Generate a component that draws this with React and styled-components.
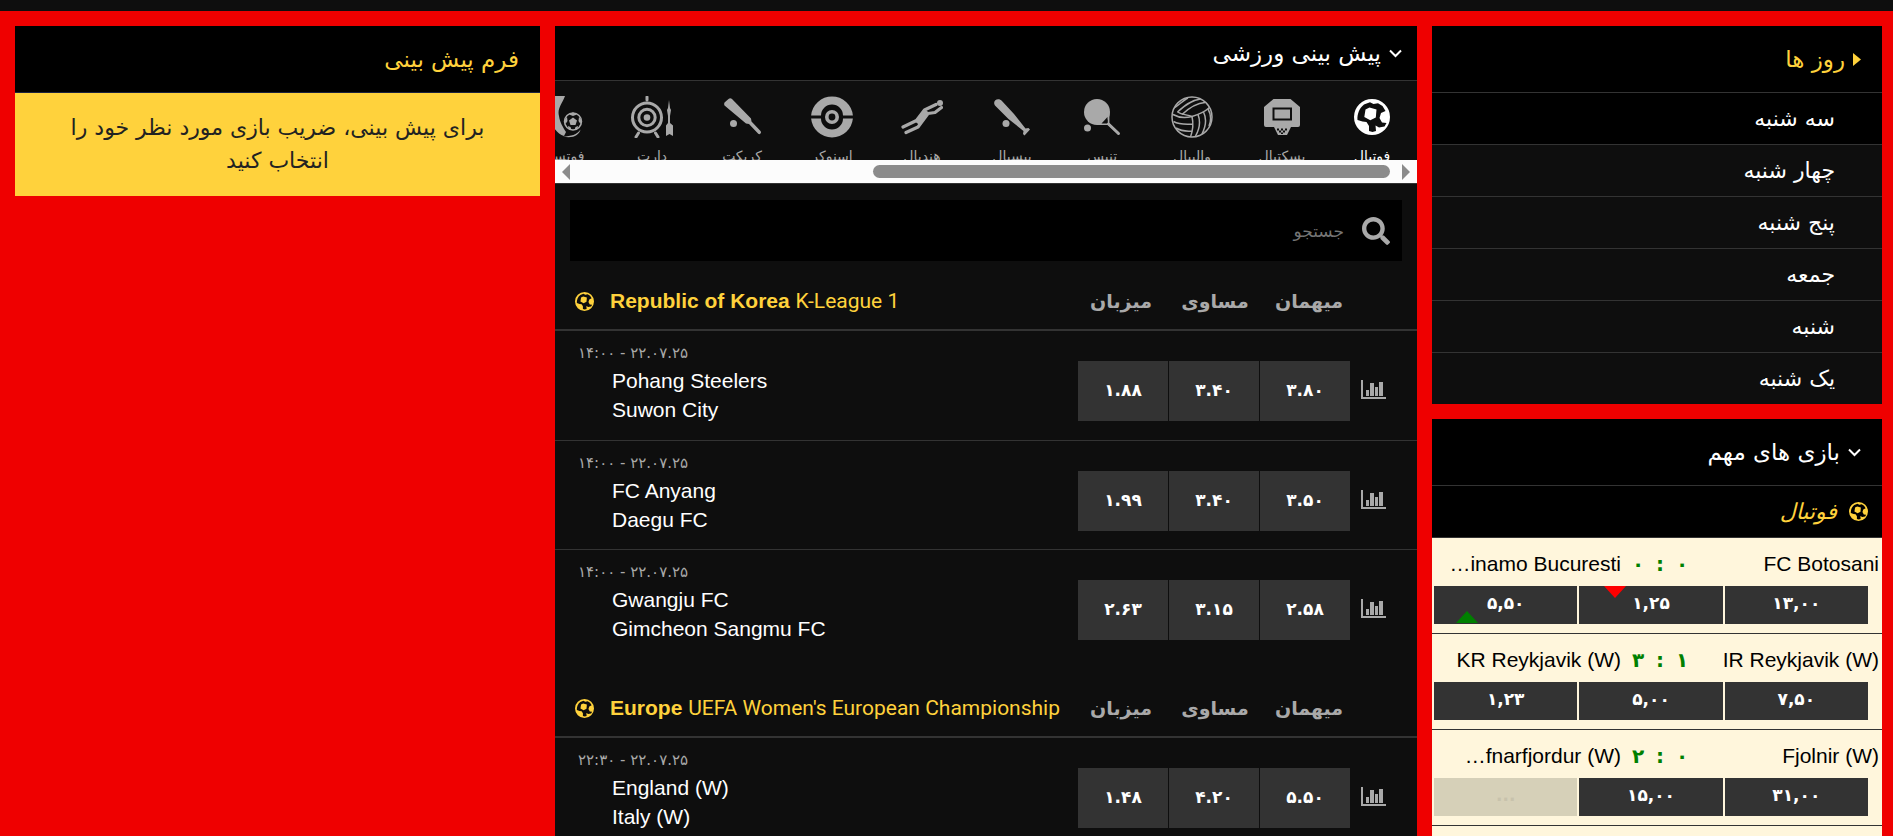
import React from "react";
import styled, { createGlobalStyle, css, ThemeProvider } from "styled-components";
import { FaSearch } from "react-icons/fa";

const theme = {
  accent: "#ffd23c",
  frame: "#ef0000",
  black: "#000",
  dark: "#0e0e0e",
  line: "#333",
  odd: "#333",
  muted: "#a9a9a9",
  cream: "#fff6dc",
  persian: '"DejaVu Sans", sans-serif',
  latin: '"Liberation Sans", "DejaVu Sans", sans-serif'
};

const GlobalStyle = createGlobalStyle`
  * {
    box-sizing: border-box;
  }
  body {
    margin: 0;
    background: ${theme.frame};
    font-family: ${theme.persian};
  }
  button, input {
    margin: 0;
    padding: 0;
    border: 0;
    background: none;
    color: inherit;
    font: inherit;
  }
  button {
    cursor: pointer;
  }
  a {
    color: inherit;
    text-decoration: none;
  }
  h2, h3, p, ul {
    margin: 0;
    padding: 0;
    font-weight: normal;
    list-style: none;
  }
`;

const days = ["سه شنبه", "چهار شنبه", "پنج شنبه", "جمعه", "شنبه", "یک شنبه"];

const liveMatches = [
  {
    home: "FC Botosani",
    away: "inamo Bucuresti",
    shortened: true,
    score: ["۰", "۰"],
    odds: [{ value: "۱۳,۰۰" }, { value: "۱,۲۵", move: "down" }, { value: "۵,۵۰", move: "up" }]
  },
  {
    home: "IR Reykjavik (W)",
    away: "KR Reykjavik (W)",
    score: ["۱", "۳"],
    odds: [{ value: "۷,۵۰" }, { value: "۵,۰۰" }, { value: "۱,۲۳" }]
  },
  {
    home: "Fjolnir (W)",
    away: "fnarfjordur (W)",
    shortened: true,
    score: ["۰", "۲"],
    odds: [{ value: "۳۱,۰۰" }, { value: "۱۵,۰۰" }, { value: "...", disabled: true }]
  }
];

const leagues = [
  {
    country: "Republic of Korea",
    name: "K-League 1",
    matches: [
      { time: "۱۴:۰۰ - ۲۲.۰۷.۲۵", teams: ["Pohang Steelers", "Suwon City"], odds: ["۱.۸۸", "۳.۴۰", "۳.۸۰"] },
      { time: "۱۴:۰۰ - ۲۲.۰۷.۲۵", teams: ["FC Anyang", "Daegu FC"], odds: ["۱.۹۹", "۳.۴۰", "۳.۵۰"] },
      { time: "۱۴:۰۰ - ۲۲.۰۷.۲۵", teams: ["Gwangju FC", "Gimcheon Sangmu FC"], odds: ["۲.۶۳", "۳.۱۵", "۲.۵۸"] }
    ]
  },
  {
    country: "Europe",
    name: "UEFA Women's European Championship",
    matches: [
      { time: "۲۲:۳۰ - ۲۲.۰۷.۲۵", teams: ["England (W)", "Italy (W)"], odds: ["۱.۴۸", "۴.۲۰", "۵.۵۰"] }
    ]
  }
];

const columns = ["میزبان", "مساوی", "میهمان"];

/* icons */

const Icon = ({ size = 42, children }) => (
  <svg width={size} height={size} viewBox="0 0 42 42" fill="currentColor" aria-hidden="true">
    {children}
  </svg>
);

const SoccerShape = () => (
  <path
    fillRule="evenodd"
    d="M21 3a18 18 0 1 1 0 36 18 18 0 0 1 0-36zM6.500 24C6 18 8.500 12 13 8.500L19 6.200 22.500 8 27 7.200 31.500 10 34.500 15 30 17 28.500 22 31 26.500 35.500 27 33.500 30.500 28 31.500 24.500 29.500 25 35 21.500 36 18 35 18 30 15.500 26 11.500 25.500zM14.500 13.500l4-2 7 2-.7 8-5.500 2.700-6-3.200z"
  />
);

const SoccerIcon = () => (
  <Icon>
    <SoccerShape />
  </Icon>
);

const SoccerSmall = ({ size = 19 }) => (
  <svg width={size} height={size} viewBox="3 3 36 36" fill="currentColor" aria-hidden="true">
    <SoccerShape />
  </svg>
);

const BasketballIcon = () => (
  <Icon>
    <path
      fillRule="evenodd"
      d="M12.500 3h17L39 11v18a2 2 0 0 1-2 2H5a2 2 0 0 1-2-2V11zM11.500 11.500v13h19.500v-13zM13.500 13.500h15.500v9H13.500z"
    />
    <path
      fillRule="evenodd"
      d="M13 31h17l-4 8h-9zM16 32.500h2v2h-2zM20 32.500h2v2h-2zM24 32.500h2v2h-2zM18 34.500h2v2h-2zM22 34.500h2v2h-2zM20 36.500h2v1.500h-2z"
    />
  </Icon>
);

const VolleyballIcon = () => (
  <Icon>
    <g fill="none" stroke="currentColor" strokeWidth="1.500">
      <circle cx="21" cy="21" r="20" />
      <path d="M2 18.500C8 22 15 22 21 20.500 26 19 33 16.500 38.500 11.500" />
      <path d="M6.500 16C13 10 20 4 29.500 3M11 18.500C18 12 26 7 34 6.500M4 11.500C10 7 13 4 17 2" />
      <path d="M21 20.500C22.500 27 22 34 19.500 41M2.500 25.500C8 28.500 14 28.500 21.500 28M5 32C10 35 15 35.500 21 35" />
      <path d="M27 18.500C29.500 25 28.500 33 24.500 40M32.500 16C35.500 22 35 30 31 38M37 13C40 18 40 25 38 30" />
      <path d="M6.500 16C11 19 16 18.500 21 20.500" />
    </g>
  </Icon>
);

const TennisIcon = () => (
  <Icon>
    <circle cx="16" cy="16" r="13" />
    <path
      d="M27.500 16v11.500M16 28h11.500l10 9.500"
      fill="none"
      stroke="currentColor"
      strokeWidth="1.800"
    />
    <path d="M20.500 27.500l6-6.500v6.500z" fill="#0e0e0e" />
    <path d="M27.500 28l10 9.500" stroke="currentColor" strokeWidth="3" strokeLinecap="round" />
    <circle cx="6.500" cy="32" r="3.500" />
  </Icon>
);

const BaseballIcon = () => (
  <Icon>
    <path d="M4 9.500C1 5 6.500 1 10.500 4.500L23 18 34.500 32.500l3-.5 1.500 1.500-5.500 6-1.500-1.500.5-3L17.500 23z" />
    <circle cx="15" cy="27.500" r="3.500" />
  </Icon>
);

const HandballIcon = () => (
  <Icon>
    <circle cx="39" cy="7" r="3" />
    <path d="M35 8.500L23.500 14 15.500 24.500 2 31" fill="none" stroke="currentColor" strokeWidth="3.200" strokeLinecap="round" strokeLinejoin="round" />
    <path d="M40.500 11.500L34 16.500 27 17.500 17 31 5 36.500" fill="none" stroke="currentColor" strokeWidth="3.200" strokeLinecap="round" strokeLinejoin="round" />
    <path d="M23 13l5 3.500-9 13-5-4z" />
  </Icon>
);

const SnookerIcon = () => (
  <Icon>
    <path d="M.1 19.500A21 21 0 0 1 41.900 19.500H32A11 11 0 0 0 10 19.500zM.1 22.500H10A11 11 0 0 0 32 22.500H41.900A21 21 0 0 1 .1 22.500z" />
    <circle cx="21" cy="21" r="5.200" fill="none" stroke="currentColor" strokeWidth="3.600" />
  </Icon>
);

const CricketIcon = () => (
  <Icon>
    <path d="M3.500 9.500a3 3 0 0 1 0-3l4-3.500a3 3 0 0 1 3.500 0l19 19.500.5 3 9 9.500a1.500 1.500 0 0 1-2.500 2.500l-9-9.500-3-.5z" />
    <circle cx="12.500" cy="27.500" r="3.500" />
  </Icon>
);

const DartsIcon = () => (
  <Icon>
    <g fill="none" stroke="currentColor" strokeWidth="3">
      <circle cx="16" cy="21.500" r="14.500" />
      <circle cx="16" cy="21.500" r="8.200" />
      <path d="M16 1v3M7.500 37l-2.500 4M24.500 37l2.500 4" strokeLinecap="round" />
    </g>
    <circle cx="16" cy="21.500" r="3.300" />
    <path d="M38 4l1 8 1 2-1 6v7l3 2.500V40l-3.500-2-3.500 2V29.500l2-2.500v-7l-1-6 1-2z" />
  </Icon>
);

const FutsalIcon = () => (
  <Icon>
    <path d="M5 0h19c-3 8-8 13-6 20 1 7 4 11 7 16l-2 4C14 38 9 24 5 18z" />
    <circle cx="32" cy="25.500" r="8.500" fill="none" stroke="currentColor" strokeWidth="1.500" />
    <path d="M32 21.500l4 3-1.500 4.500h-5L28 24.500zM28 18.500l4 1.500 4-1.500-4-2zM38 21l2.500 3-1 4-2-3zM26 21l-2.500 3 1 4 2-3zM27 30l2.500 1 1 3-3-1zM37 30l-2.500 1-1 3 3-1z" />
    <path d="M22 40.500c8 0 14-2 17.500-7-1 5.500-8 9.500-17.500 7z" />
  </Icon>
);

const StatsIcon = () => (
  <svg width="25" height="20" viewBox="0 0 25 20" fill="currentColor" aria-hidden="true">
    <path d="M0 0h2v17h23v2H0zM5 10h3v6H5zM9 3h4v13H9zM14 7h3v9h-3zM18 2h4v14h-4z" />
  </svg>
);

const ChevronDown = () => (
  <svg width="13" height="9" viewBox="0 0 13 9" fill="none" stroke="currentColor" strokeWidth="2" aria-hidden="true">
    <path d="M1 1.500l5.500 5.500L12 1.500" />
  </svg>
);

const CaretIcon = () => (
  <svg width="8" height="13" viewBox="0 0 8 13" fill="currentColor" aria-hidden="true">
    <path d="M0 0l8 6.500L0 13z" />
  </svg>
);

const ArrowTip = ({ flip }) => (
  <svg width="8" height="16" viewBox="0 0 8 16" fill="#8b8b8b" aria-hidden="true">
    <path d={flip ? "M8 0L0 8l8 8z" : "M0 0l8 8-8 8z"} />
  </svg>
);

const sports = [
  { label: "فوتبال", icon: <SoccerIcon />, active: true },
  { label: "بسکتبال", icon: <BasketballIcon /> },
  { label: "والیبال", icon: <VolleyballIcon /> },
  { label: "تنیس", icon: <TennisIcon /> },
  { label: "بیسبال", icon: <BaseballIcon /> },
  { label: "هندبال", icon: <HandballIcon /> },
  { label: "اسنوکر", icon: <SnookerIcon /> },
  { label: "کریکت", icon: <CricketIcon /> },
  { label: "دارت", icon: <DartsIcon /> },
  { label: "فوتسال", icon: <FutsalIcon /> }
];

const DaysPanel = () => (
  <Panel>
    <PanelHeader $accent>
      <CaretIcon />
      <PanelTitle>روز ها</PanelTitle>
    </PanelHeader>
    <ul>
      {days.map((day, index) => (
        <DayItem key={day} $active={index === 0}>
          <DayLink href="#">{day}</DayLink>
        </DayItem>
      ))}
    </ul>
  </Panel>
);

const LiveMatch = ({ match }) => (
  <LiveRow>
    <LiveTeams>
      <LiveTeam>
        <bdi>{match.home}</bdi>
      </LiveTeam>
      <LiveScore>
        <span>{match.score[0]}</span>
        <span>:</span>
        <span>{match.score[1]}</span>
      </LiveScore>
      <LiveTeam>
        <bdi>{match.away}</bdi>
        {match.shortened && "…"}
      </LiveTeam>
    </LiveTeams>
    <LiveOdds>
      {match.odds.map(odd => (
        <LiveOdd key={odd.value} type="button" disabled={odd.disabled}>
          {odd.value}
          {odd.move && <MoveMark $move={odd.move} />}
        </LiveOdd>
      ))}
    </LiveOdds>
  </LiveRow>
);

const ImportantPanel = () => (
  <Panel $grow>
    <PanelHeader>
      <ChevronDown />
      <PanelTitle>بازی های مهم</PanelTitle>
    </PanelHeader>
    <SportHeading>
      <SoccerSmall />
      <em>فوتبال</em>
    </SportHeading>
    {liveMatches.map(match => (
      <LiveMatch key={match.home} match={match} />
    ))}
  </Panel>
);

const SportTabs = () => (
  <TabsArea>
    <TabsStrip>
      {sports.map(sport => (
        <SportTab key={sport.label} type="button" $active={sport.active}>
          {sport.icon}
          <span>{sport.label}</span>
        </SportTab>
      ))}
    </TabsStrip>
    <ScrollBar>
      <ArrowTip />
      <ScrollTrack>
        <ScrollThumb />
      </ScrollTrack>
      <ArrowTip flip />
    </ScrollBar>
  </TabsArea>
);

const League = ({ league }) => (
  <section>
    <LeagueHeader>
      <SoccerSmall />
      <LeagueName>
        <b>{league.country}</b> <LeagueTitle>{league.name}</LeagueTitle>
      </LeagueName>
      {columns.map(column => (
        <ColumnLabel key={column}>{column}</ColumnLabel>
      ))}
    </LeagueHeader>
    {league.matches.map(match => (
      <MatchRow key={match.teams[0]}>
        <MatchInfo>
          <MatchTime>{match.time}</MatchTime>
          {match.teams.map(team => (
            <TeamName key={team}>{team}</TeamName>
          ))}
        </MatchInfo>
        <OddsGroup>
          {match.odds.map(odd => (
            <OddButton key={odd} type="button">
              {odd}
            </OddButton>
          ))}
        </OddsGroup>
        <StatsCell>
          <button type="button" aria-label="آمار">
            <StatsIcon />
          </button>
        </StatsCell>
      </MatchRow>
    ))}
  </section>
);

const App = () => (
  <ThemeProvider theme={theme}>
    <GlobalStyle />
    <Page dir="rtl">
      <TopBar />
      <Columns>
        <Side>
          <DaysPanel />
          <ImportantPanel />
        </Side>
        <Center>
          <CenterHeader>
            <ChevronDown />
            <PanelTitle>پیش بینی ورزشی</PanelTitle>
          </CenterHeader>
          <SportTabs />
          <SearchBox>
            <FaSearch size={28} aria-hidden="true" />
            <SearchInput type="text" placeholder="جستجو" aria-label="جستجو" />
          </SearchBox>
          <Leagues dir="ltr">
            {leagues.map(league => (
              <League key={league.country} league={league} />
            ))}
          </Leagues>
        </Center>
        <Side>
          <Panel>
            <PanelHeader $accent $navy>
              <PanelTitle>فرم پیش بینی</PanelTitle>
            </PanelHeader>
            <Notice>برای پیش بینی، ضریب بازی مورد نظر خود را انتخاب کنید</Notice>
          </Panel>
        </Side>
      </Columns>
    </Page>
  </ThemeProvider>
);

export default App;

const Page = styled.div`
  height: 100vh;
  display: flex;
  flex-direction: column;
  overflow: hidden;
  background: ${({ theme }) => theme.frame};
`;

const TopBar = styled.div`
  height: 11px;
  flex: none;
  background: ${({ theme }) => theme.dark};
`;

const Columns = styled.main`
  flex: 1;
  min-height: 0;
  display: grid;
  grid-template-columns: minmax(0, 450fr) minmax(0, 862fr) minmax(0, 525fr);
  gap: 15px;
  padding: 15px 11px 0 15px;
`;

const Side = styled.aside`
  min-height: 0;
  display: flex;
  flex-direction: column;
  gap: 15px;
`;

const Center = styled.section`
  min-height: 0;
  background: ${({ theme }) => theme.dark};
  color: #fff;
`;

const Panel = styled.section`
  background: ${({ theme, $grow }) => ($grow ? theme.cream : theme.dark)};
  ${({ $grow }) => $grow && css`
    flex: 1;
  `}
`;

const PanelHeader = styled.header`
  height: 67px;
  display: flex;
  align-items: center;
  gap: 8px;
  padding: 0 21px;
  background: ${({ theme }) => theme.black};
  color: ${({ theme, $accent }) => ($accent ? theme.accent : "#fff")};
  border-bottom: 1px solid ${({ theme, $navy }) => ($navy ? "#1c2340" : theme.line)};
`;

const PanelTitle = styled.h2`
  font-size: 23px;
  line-height: 32px;
`;

const CenterHeader = styled(PanelHeader)`
  height: 55px;
  padding: 0 15px;
`;

const Notice = styled.p`
  padding: 18px 48px 19px;
  background: ${({ theme }) => theme.accent};
  color: #222;
  font-size: 22px;
  line-height: 33px;
  text-align: center;
`;

const DayItem = styled.li`
  background: ${({ theme, $active }) => ($active ? theme.black : theme.dark)};
  color: #fff;

  & + & {
    border-top: 1px solid ${({ theme }) => theme.line};
  }
`;

const DayLink = styled.a`
  display: block;
  padding: 10px 47px 9px;
  font-size: 22px;
  line-height: 32px;
`;

const SportHeading = styled.h3`
  height: 52px;
  display: flex;
  align-items: center;
  gap: 12px;
  padding: 0 14px;
  background: ${({ theme }) => theme.black};
  color: ${({ theme }) => theme.accent};
  border-bottom: 1px solid ${({ theme }) => theme.line};
  font-size: 22px;
`;

const LiveRow = styled.div`
  height: 96px;
  padding-top: 10px;
  border-bottom: 1px solid ${({ theme }) => theme.line};
`;

const LiveTeams = styled.div`
  display: grid;
  grid-template-columns: minmax(0, 1fr) 78px minmax(0, 178px);
  padding: 0 3px 0 11px;
  font-family: ${({ theme }) => theme.latin};
  font-size: 21px;
  line-height: 32px;
`;

const LiveTeam = styled.div`
  white-space: nowrap;
`;

const LiveScore = styled.div`
  display: flex;
  justify-content: center;
  color: #008000;
  font-family: ${({ theme }) => theme.persian};
  font-weight: bold;
  font-size: 20px;

  span {
    width: 22px;
    text-align: center;
  }
`;

const LiveOdds = styled.div`
  display: flex;
  gap: 2px;
  margin-top: 6px;
  padding: 0 14px 0 2px;
`;

const LiveOdd = styled.button`
  position: relative;
  flex: 1 1 0;
  height: 38px;
  padding-bottom: 4px;
  overflow: hidden;
  background: ${({ theme }) => theme.odd};
  color: #fff;
  font-weight: bold;
  font-size: 17px;
  line-height: 32px;

  &:disabled {
    background: #d6d0b8;
    color: #c8c2ac;
  }
`;

const MoveMark = styled.span`
  position: absolute;
  border: 11px solid transparent;
  ${({ $move }) =>
    $move === "down"
      ? css`
          top: 0;
          left: 25px;
          border-top: 12px solid #f00;
          border-bottom: 0;
        `
      : css`
          bottom: 1px;
          left: 22px;
          border-bottom: 12px solid #008000;
          border-top: 0;
        `}
`;

const TabsArea = styled.div`
  border-bottom: 1px solid ${({ theme }) => theme.line};
`;

const TabsStrip = styled.div`
  height: 79px;
  display: flex;
  overflow: hidden;
`;

const SportTab = styled.button`
  flex: 0 0 90px;
  display: flex;
  flex-direction: column;
  align-items: center;
  gap: 6px;
  padding-top: 15px;
  color: ${({ theme, $active }) => ($active ? "#fff" : theme.muted)};
  font-size: 14px;
  line-height: 24px;

  svg {
    flex: none;
  }
`;

const ScrollBar = styled.div`
  height: 23px;
  display: flex;
  align-items: center;
  gap: 12px;
  padding: 0 7px;
  background: #fcfcfc;
`;

const ScrollTrack = styled.div`
  flex: 1;
`;

const ScrollThumb = styled.div`
  width: 64%;
  height: 13px;
  border-radius: 7px;
  background: #8b8b8b;
`;

const SearchBox = styled.label`
  height: 61px;
  display: flex;
  align-items: center;
  gap: 18px;
  margin: 16px 15px 0;
  padding: 0 12px;
  background: ${({ theme }) => theme.black};
  color: ${({ theme }) => theme.muted};

  svg {
    flex: none;
  }
`;

const SearchInput = styled.input`
  flex: 1;
  min-width: 0;
  font-size: 17px;
  line-height: 32px;
  outline: 0;

  &::placeholder {
    color: #757575;
    opacity: 1;
  }
`;

const Leagues = styled.div`
  padding-top: 10px;
  font-family: ${({ theme }) => theme.latin};
  font-size: 21px;

  section + section {
    margin-top: 20px;
  }
`;

const LeagueHeader = styled.header`
  height: 60px;
  display: flex;
  align-items: center;
  padding: 2px 61px 0 20px;
  color: ${({ theme }) => theme.accent};
  border-bottom: 2px solid ${({ theme }) => theme.line};
`;

const LeagueName = styled.h3`
  flex: 1;
  min-width: 0;
  padding-left: 16px;
  font-size: 21px;
  line-height: 28px;
  white-space: nowrap;
`;

const LeagueTitle = styled.span`
  font-family: Roboto, sans-serif;
`;

const ColumnLabel = styled.span`
  width: 94px;
  text-align: center;
  color: ${({ theme }) => theme.muted};
  font-family: ${({ theme }) => theme.persian};
  font-size: 19px;
  font-weight: bold;
`;

const MatchRow = styled.div`
  display: flex;
  height: 109px;
  padding-left: 23px;

  & + & {
    border-top: 1px solid ${({ theme }) => theme.line};
  }
`;

const MatchInfo = styled.div`
  flex: 1;
  min-width: 0;
  padding-top: 10px;
`;

const MatchTime = styled.p`
  color: ${({ theme }) => theme.muted};
  font-family: ${({ theme }) => theme.persian};
  font-size: 15px;
  line-height: 25px;
`;

const TeamName = styled.p`
  padding-left: 34px;
  line-height: 29px;
  white-space: nowrap;
`;

const OddsGroup = styled.div`
  display: flex;
  gap: 1px;
  padding-top: 30px;
`;

const OddButton = styled.button`
  width: 90px;
  height: 60px;
  padding-bottom: 2px;
  background: ${({ theme }) => theme.odd};
  color: #fff;
  font-family: ${({ theme }) => theme.persian};
  font-weight: bold;
  font-size: 17px;
`;

const StatsCell = styled.div`
  width: 67px;
  padding: 49px 0 0 11px;
  color: ${({ theme }) => theme.muted};
`;
